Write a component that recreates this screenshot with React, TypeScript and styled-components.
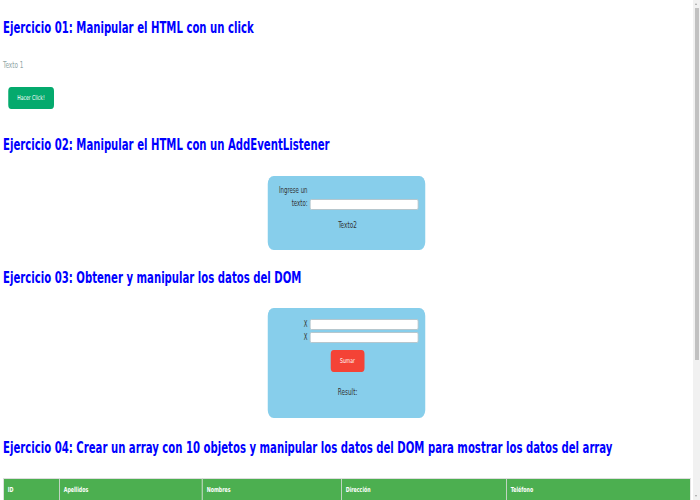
import React from 'react';
import styled, { createGlobalStyle } from 'styled-components';

// The page is laid out wide and squeezed horizontally, like the captured page.
const K = 0.75;
const u = (px: number) => `${(px / K).toFixed(2)}px`;

const GlobalStyle = createGlobalStyle`
  body {
    margin: 0;
    overflow-x: hidden;
    background: #ffffff;
    font-family: "DejaVu Sans Condensed", "DejaVu Sans", sans-serif;
  }
`;

const Page = styled.main`
  box-sizing: border-box;
  width: ${u(693)};
  padding: 0 ${u(3)} 187px;
  transform: scaleX(${K});
  transform-origin: 0 0;
`;

const Title = styled.h1<{ $top: number }>`
  margin: ${(p) => p.$top}px 0 0;
  font-size: 15px;
  line-height: 18px;
  font-weight: bold;
  white-space: nowrap;
  color: #0000ff;
`;

const Note = styled.p`
  margin: 24px 0 0;
  font-size: 8.5px;
  line-height: 9px;
  color: #8fa6a6;
`;

const ActionButton = styled.button<{ $color: string; $width: number; $top: number }>`
  display: block;
  width: ${(p) => u(p.$width)};
  height: 22px;
  margin-top: ${(p) => p.$top}px;
  padding: 0;
  border: none;
  border-radius: 4px;
  background: ${(p) => p.$color};
  color: #ffffff;
  font-family: inherit;
  font-size: 6.75px;
  cursor: pointer;
`;

const ClickButton = styled(ActionButton)`
  margin-left: ${u(5)};
`;

const Panel = styled.section<{ $top: number; $padTop: number; $padBottom: number }>`
  display: flex;
  flex-direction: column;
  box-sizing: border-box;
  width: ${u(158)};
  margin: ${(p) => p.$top}px auto 0;
  padding: ${(p) => p.$padTop}px ${u(7)} ${(p) => p.$padBottom}px ${u(9)};
  background: #87ceeb;
  border-radius: 8px;
  color: #333333;
`;

const FieldRow = styled.div<{ $top?: number }>`
  display: flex;
  align-items: flex-end;
  gap: ${u(2)};
  margin-top: ${(p) => p.$top ?? 0}px;
`;

const FieldLabel = styled.label<{ $lineHeight: number }>`
  flex: none;
  width: ${u(31)};
  text-align: right;
  white-space: pre-line;
  font-size: 8px;
  line-height: ${(p) => p.$lineHeight}px;
`;

const TextInput = styled.input.attrs(() => ({ type: 'text' }))`
  flex: none;
  box-sizing: border-box;
  width: ${u(109)};
  height: 11px;
  padding: 0 2px;
  border: 1px solid #b4c2c8;
  border-radius: 2px;
  background: #ffffff;
  font-size: 7px;
`;

const Output = styled.div<{ $top: number }>`
  margin-top: ${(p) => p.$top}px;
  text-align: center;
  font-size: 8.5px;
  line-height: 13px;
`;

const SumButton = styled(ActionButton)`
  align-self: center;
`;

const Table = styled.table`
  width: 100%;
  margin-top: 21px;
  border-collapse: collapse;
  table-layout: fixed;
`;

const HeadCell = styled.th<{ $width: number }>`
  box-sizing: border-box;
  width: ${(p) => u(p.$width)};
  padding: 7px ${u(4)};
  border: 1px solid #dddddd;
  background: #4caf50;
  color: #ffffff;
  text-align: left;
  font-size: 7px;
  line-height: 9px;
  font-weight: bold;
`;

const ScrollTrack = styled.div`
  position: fixed;
  top: 0;
  right: 0;
  width: 7px;
  height: 100vh;
  background: #f1f1f1;
`;

const ScrollThumb = styled.div`
  position: absolute;
  top: 8px;
  left: 1.5px;
  width: 4.5px;
  height: 352px;
  background: #c1c1c1;
`;

const ScrollArrow = styled.div<{ $down?: boolean }>`
  position: absolute;
  left: 2px;
  ${(p) => (p.$down ? 'bottom: 3px;' : 'top: 3px;')}
  border-left: 1.5px solid transparent;
  border-right: 1.5px solid transparent;
  ${(p) => (p.$down ? 'border-top' : 'border-bottom')}: 2px solid #a3a3a3;
`;

const columns = [
  { label: 'ID', width: 56 },
  { label: 'Apellidos', width: 143 },
  { label: 'Nombres', width: 139 },
  { label: 'Dirección', width: 165 },
  { label: 'Teléfono', width: 184 },
];

export default function App() {
  return (
    <>
      <GlobalStyle />
      <Page>
        <Title $top={19}>Ejercicio 01: Manipular el HTML con un click</Title>
        <Note>Texto 1</Note>
        <ClickButton $color="#04aa6d" $width={46} $top={17}>
          Hacer Click!
        </ClickButton>

        <Title as="h2" $top={27}>
          Ejercicio 02: Manipular el HTML con un AddEventListener
        </Title>
        <Panel $top={22} $padTop={7.5} $padBottom={18}>
          <FieldRow>
            <FieldLabel $lineHeight={13}>{'Ingrese un\ntexto:'}</FieldLabel>
            <TextInput />
          </FieldRow>
          <Output $top={9}>Texto2</Output>
        </Panel>

        <Title as="h2" $top={19}>
          Ejercicio 03: Obtener y manipular los datos del DOM
        </Title>
        <Panel $top={21} $padTop={11} $padBottom={18.5}>
          <FieldRow>
            <FieldLabel $lineHeight={11}>X</FieldLabel>
            <TextInput />
          </FieldRow>
          <FieldRow $top={2}>
            <FieldLabel $lineHeight={11}>X</FieldLabel>
            <TextInput />
          </FieldRow>
          <SumButton $color="#f44336" $width={34} $top={7}>
            Sumar
          </SumButton>
          <Output $top={14.5}>Result:</Output>
        </Panel>

        <Title as="h2" $top={21}>
          Ejercicio 04: Crear un array con 10 objetos y manipular los datos del DOM para mostrar los
          datos del array
        </Title>
        <Table>
          <thead>
            <tr>
              {columns.map((c) => (
                <HeadCell key={c.label} $width={c.width}>
                  {c.label}
                </HeadCell>
              ))}
            </tr>
          </thead>
        </Table>
      </Page>
      <ScrollTrack>
        <ScrollArrow />
        <ScrollThumb />
        <ScrollArrow $down />
      </ScrollTrack>
    </>
  );
}
